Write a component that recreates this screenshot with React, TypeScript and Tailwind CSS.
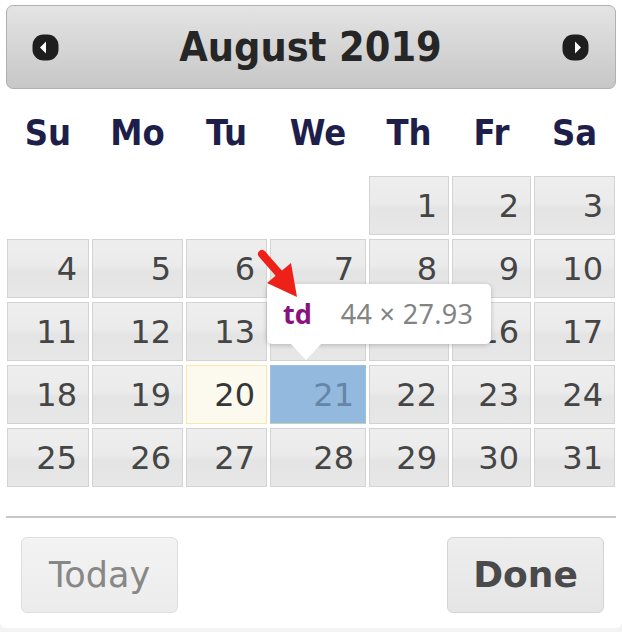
import React from 'react'

const weeks: (number | null)[][] = [
  [null, null, null, null, 1, 2, 3],
  [4, 5, 6, 7, 8, 9, 10],
  [11, 12, 13, 14, 15, 16, 17],
  [18, 19, 20, 21, 22, 23, 24],
  [25, 26, 27, 28, 29, 30, 31],
]

const dayNames = ['Su', 'Mo', 'Tu', 'We', 'Th', 'Fr', 'Sa']

const cols = 'grid grid-cols-[82px_91px_81px_96px_80px_79px_81px] gap-x-[3px]'

const DayCell = ({ day }: { day: number | null }) => {
  if (day === null) return <div />
  let look =
    'border-[#d3d3d3] text-[#454545] bg-[linear-gradient(to_bottom,#eeeeee_0%,#ebebeb_45%,#e4e4e4_55%,#e7e7e7_100%)]'
  if (day === 20) look = 'border-[#f5eaa8] bg-[#fcfaee] text-[#363636]'
  if (day === 21) look = 'border-[#9cc0e2] border-b-[#bcd6ad] bg-[#93b9df] text-[#6786a6]'
  return (
    <div
      className={`border ${look} flex items-center justify-end pr-[11px] text-[32px] leading-none font-['DejaVu_Sans',sans-serif]`}
    >
      {day}
    </div>
  )
}

const NavIcon = ({ dir }: { dir: 'prev' | 'next' }) => (
  <svg width="27" height="27" viewBox="0 0 27 27">
    <rect x="0.5" y="0.5" width="26" height="26" rx="11" fill="#1e1e1e" />
    {dir === 'prev' ? (
      <polygon points="8,13.5 14,7.5 14,19.5" fill="#ffffff" />
    ) : (
      <polygon points="19,13.5 13,7.5 13,19.5" fill="#ffffff" />
    )}
  </svg>
)

const App = () => {
  return (
    <div className="relative w-[622px] h-[632px] bg-[#f3f3f3] overflow-hidden">
      <div className="h-[628px] bg-white rounded-b-[6px] flex flex-col">
        <div className="mx-[6px] mt-[5px] h-[84px] rounded-[7px] border border-[#b0b0b0] bg-linear-to-b from-[#e4e4e4] to-[#c7c7c7] flex items-center justify-between pl-[25px] pr-[26px]">
          <NavIcon dir="prev" />
          <span className="text-[41px] leading-none font-bold text-[#262626] [font-stretch:condensed] font-['DejaVu_Sans_Condensed','DejaVu_Sans',sans-serif]">
            August 2019
          </span>
          <NavIcon dir="next" />
        </div>

        <div className={`${cols} ml-[7px] h-[87px] items-center`}>
          {dayNames.map((d) => (
            <div
              key={d}
              className="text-center text-[36px] leading-none font-bold text-[#1e1e4a] [font-stretch:condensed] font-['DejaVu_Sans_Condensed','DejaVu_Sans',sans-serif]"
            >
              {d}
            </div>
          ))}
        </div>

        <div className={`${cols} ml-[7px] gap-y-[4px] auto-rows-[59px]`}>
          {weeks.flat().map((d, i) => (
            <DayCell key={i} day={d} />
          ))}
        </div>

        <div className="mx-[6px] mt-[29px] h-[2px] bg-[#c6c6c6]" />

        <div className="flex justify-between pl-[21px] pr-[18px] mt-[19px]">
          <button className="w-[157px] h-[76px] rounded-[6px] border border-[#dedede] bg-linear-to-b from-[#f3f3f3] to-[#ececec] text-[35px] text-[#878787] font-['DejaVu_Sans',sans-serif]">
            Today
          </button>
          <button className="w-[157px] h-[76px] rounded-[6px] border border-[#d3d3d3] bg-linear-to-b from-[#eeeeee] to-[#e5e5e5] text-[36px] font-bold text-[#4a4a4a] font-['DejaVu_Sans',sans-serif]">
            Done
          </button>
        </div>
      </div>

      <div className="absolute left-[267px] top-[284px] w-[224px] h-[60px] bg-white rounded-[5px] shadow-[0_1px_5px_rgba(0,0,0,0.22)] flex items-center pl-[16px] font-['Noto_Sans','Open_Sans',sans-serif]">
        <span className="text-[27px] font-bold text-[#881280]">td</span>
        <span className="ml-[29px] text-[27px] tracking-[0.3px] text-[#838383]">44 × 27.93</span>
      </div>
      <svg className="absolute left-[290px] top-[343px]" width="32" height="18" viewBox="0 0 32 18">
        <polygon points="0,0 32,0 16,17" fill="#ffffff" />
      </svg>

      <svg className="absolute left-[255px] top-[245px]" width="50" height="58" viewBox="0 0 50 58">
        <line x1="7" y1="9" x2="28" y2="33" stroke="#ee2118" strokeWidth="8" strokeLinecap="round" />
        <polygon points="12,38 36,18 42,52" fill="#ee2118" />
      </svg>
    </div>
  )
}

export default App
